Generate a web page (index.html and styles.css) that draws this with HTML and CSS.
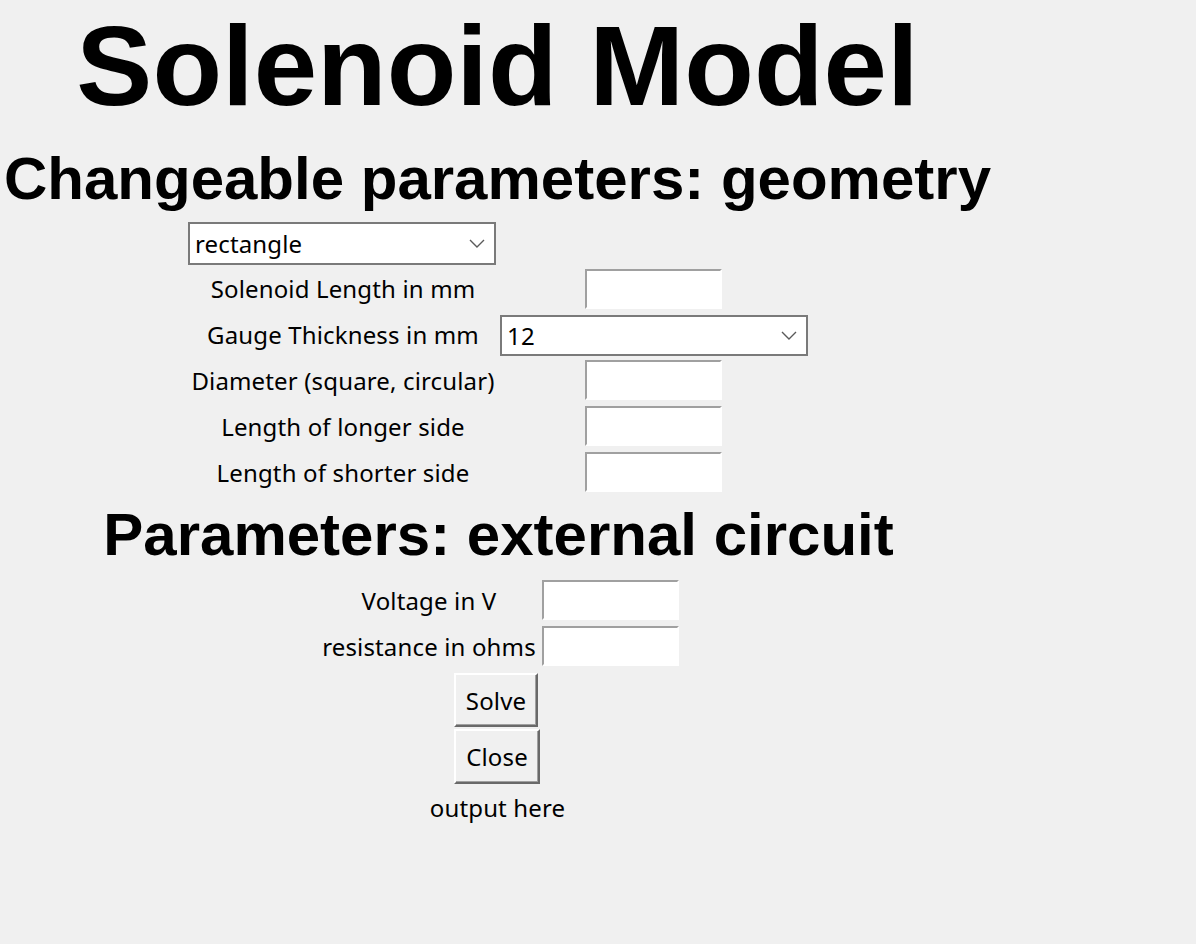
FILE: index.html
```html
<!DOCTYPE html>
<html lang="en">
<head>
<meta charset="utf-8">
<title>Solenoid Model</title>
<link rel="stylesheet" href="styles.css">
</head>
<body>
<div class="app">
  <h1 class="title">Solenoid Model</h1>
  <h2 class="heading heading-geo">Changeable parameters: geometry</h2>
  <div class="form form-geo">
    <div class="combo combo-shape">
      <span class="combo-text">rectangle</span>
      <svg class="chev" width="16" height="9" viewBox="0 0 16 9"><path d="M1 1 L8 8 L15 1" fill="none" stroke="#5a5a5a" stroke-width="1.4"/></svg>
    </div>
    <div class="cell-empty"></div>

    <label class="lbl">Solenoid Length in mm</label>
    <input class="entry" type="text">

    <label class="lbl">Gauge Thickness in mm</label>
    <div class="combo combo-gauge">
      <span class="combo-text">12</span>
      <svg class="chev" width="16" height="9" viewBox="0 0 16 9"><path d="M1 1 L8 8 L15 1" fill="none" stroke="#5a5a5a" stroke-width="1.4"/></svg>
    </div>

    <label class="lbl">Diameter (square, circular)</label>
    <input class="entry" type="text">

    <label class="lbl">Length of longer side</label>
    <input class="entry" type="text">

    <label class="lbl">Length of shorter side</label>
    <input class="entry" type="text">
  </div>

  <h2 class="heading heading-ext">Parameters: external circuit</h2>
  <div class="form form-ext">
    <label class="lbl">Voltage in V</label>
    <input class="entry" type="text">
    <label class="lbl">resistance in ohms</label>
    <input class="entry" type="text">
  </div>

  <button class="btn btn-solve" type="button">Solve</button>
  <button class="btn btn-close" type="button">Close</button>
  <div class="output">output here</div>
</div>
</body>
</html>
```
FILE: styles.css
```css
html, body {
  margin: 0;
  padding: 0;
  background: #f0f0f0;
}
body {
  width: 1196px;
  height: 944px;
  overflow: hidden;
  color: #000;
  font-family: "Noto Sans", "Open Sans", sans-serif;
}
.app {
  width: 995px;
  display: flex;
  flex-direction: column;
  align-items: center;
}
.title {
  margin: 0;
  font-family: "Liberation Sans", Arial, sans-serif;
  font-weight: bold;
  font-size: 114px;
  line-height: 132px;
  white-space: nowrap;
}
.heading {
  margin: 0;
  font-family: "Liberation Sans", Arial, sans-serif;
  font-weight: bold;
  font-size: 60px;
  line-height: 70px;
  white-space: nowrap;
}
.heading-geo { margin-top: 12px; }
.heading-ext { margin-top: 4px; margin-left: 2px; }

.form {
  display: grid;
  align-items: start;
}
.form-geo {
  margin-top: 6px;
  margin-left: 3px;
  grid-template-columns: 308px 312px;
  grid-template-rows: 47px 45px 46px 46px 46px 46px;
}
.form-ext {
  margin-top: 8px;
  margin-left: 0;
  grid-template-columns: 225px 137px;
  grid-template-rows: 46px 46px;
}
.lbl {
  align-self: center;
  text-align: center;
  font-size: 24px;
  letter-spacing: 0.15px;
  line-height: 30px;
  white-space: nowrap;
  margin-top: -1px;
}
.entry {
  box-sizing: border-box;
  justify-self: center;
  width: 137px;
  height: 40px;
  margin: 2px 0 0 0;
  padding: 0 4px;
  border: 2px solid;
  border-color: #a0a0a0 #ffffff #ffffff #a0a0a0;
  background: #fff;
  outline: none;
  font: inherit;
}
.combo {
  box-sizing: border-box;
  height: 43px;
  margin-top: 2px;
  border: 2px solid #7a7a7a;
  background: #fff;
  display: flex;
  align-items: center;
  justify-content: space-between;
  padding: 0 9px 0 5px;
}
.combo-shape { width: 308px; margin-left: -1px; }
.combo-gauge {
  width: 308px;
  height: 41px;
  margin-top: 3px;
  margin-left: 3px;
}
.combo-text {
  font-size: 24px;
  letter-spacing: 0.15px;
  line-height: 30px;
}
.chev { display: block; }

.btn {
  box-sizing: border-box;
  height: 54px;
  padding: 0;
  border: 2px solid;
  border-color: #ffffff #696969 #696969 #ffffff;
  box-shadow: inset -1px -1px 0 #a0a0a0;
  background: #f0f0f0;
  font-family: "Noto Sans", "Open Sans", sans-serif;
  font-size: 24px;
  letter-spacing: 0.15px;
  color: #000;
}
.btn-solve { width: 84px; margin-top: 3px; margin-left: -3px; }
.btn-close { width: 86px; height: 55px; margin-top: 2px; margin-left: -1px; }
.output {
  margin-top: 9px;
  font-size: 24px;
  letter-spacing: 0.15px;
  line-height: 30px;
}
```
